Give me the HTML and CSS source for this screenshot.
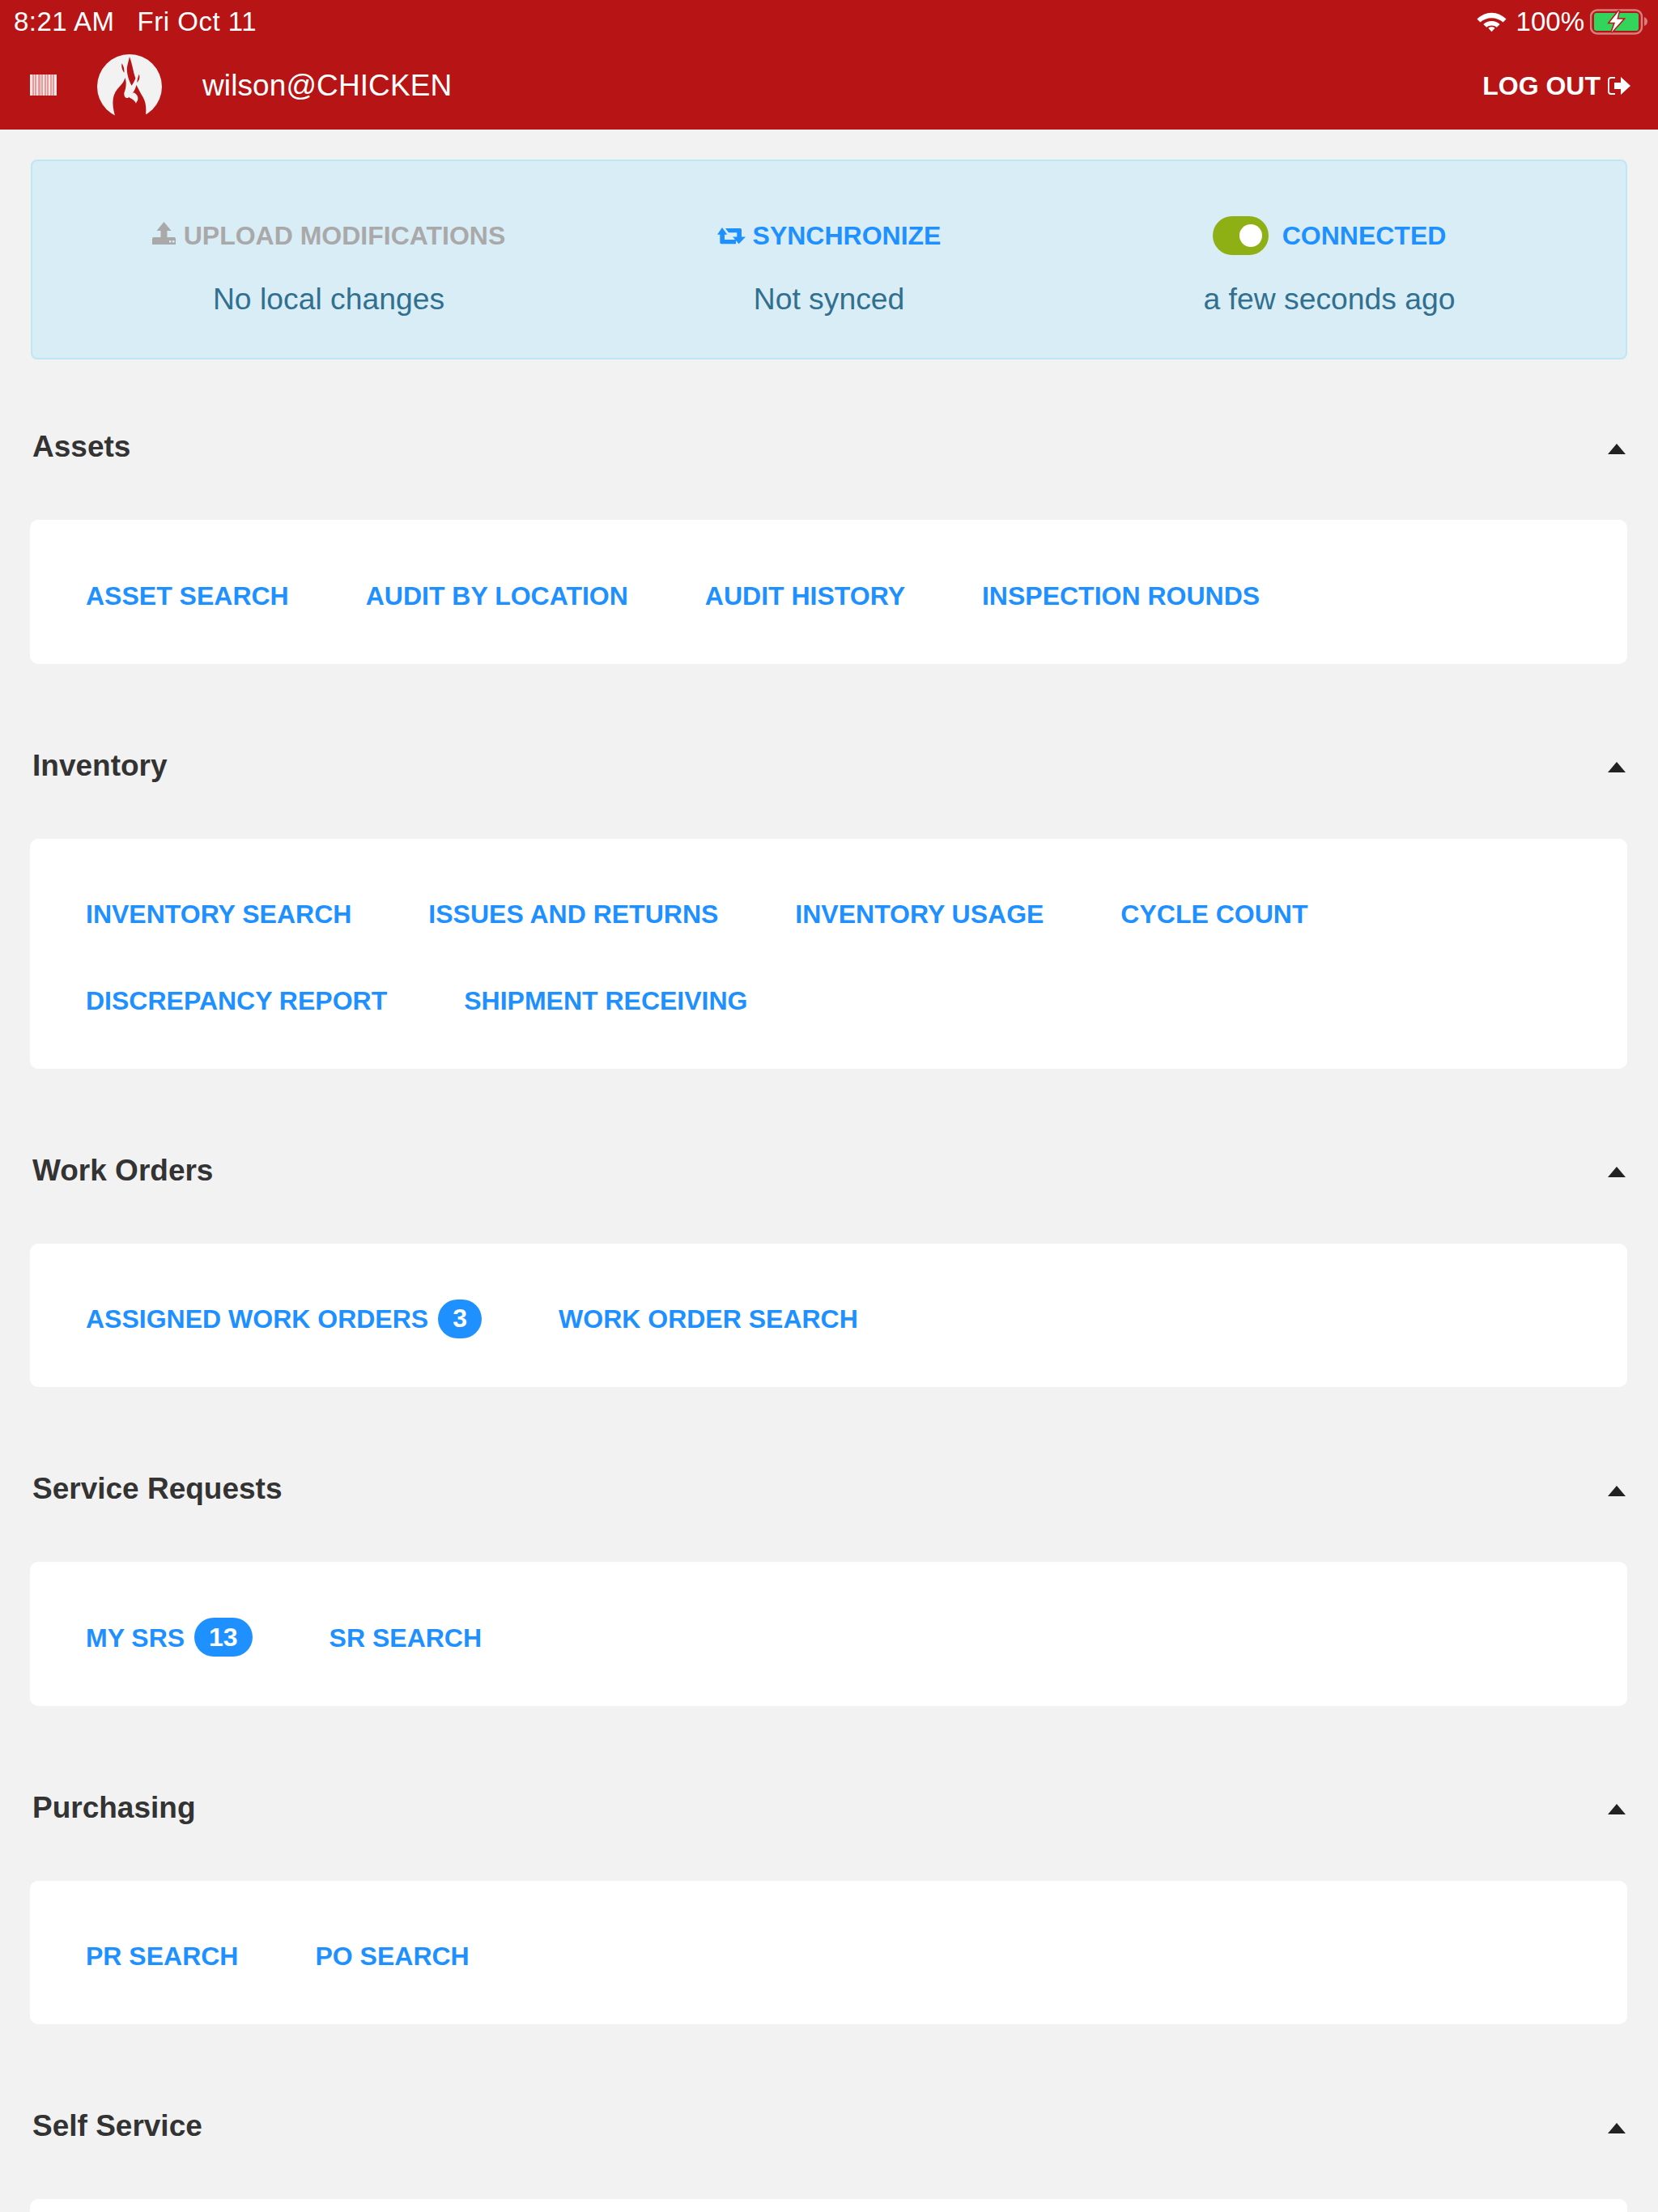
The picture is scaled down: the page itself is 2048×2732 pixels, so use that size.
FILE: index.html
```html
<!DOCTYPE html>
<html lang="en">
<head>
<meta charset="utf-8">
<title>Home</title>
<link rel="stylesheet" href="styles.css">
</head>
<body>
<header class="topbar">
  <div class="status">
    <div class="status-time"><span>8:21 AM</span><span>Fri Oct 11</span></div>
    <div class="status-right">
      <svg class="wifi" viewBox="0 4 38 24"><path d="M19 4C12 4 6 7 .5 12l4 4C8.500 12.500 13.500 10.500 19 10.500s10.500 2 14.500 5.500l4-4C32 7 26 4 19 4zM19 14.500c-4 0-7.500 1.400-10.500 4l4 4c2-1.700 4-2.500 6.500-2.500s4.500.8 6.500 2.500l4-4c-3-2.600-6.500-4-10.500-4zM19 22c-1.800 0-3 .5-4.200 1.500L19 28l4.200-4.500C22 22.500 20.800 22 19 22z" fill="#fff"/></svg>
      <span class="percent">100%</span>
      <svg class="battery" viewBox="0 0 72 32"><rect x="1" y="1.500" width="63" height="29" rx="8" fill="none" stroke="#fff" stroke-opacity=".45" stroke-width="2.500"/><path d="M67 10c2.500.8 4 3 4 5.500s-1.500 4.700-4 5.500z" fill="#fff" fill-opacity=".45"/><rect x="5" y="5" width="55" height="22" rx="3" fill="#32d45c"/><path class="bolt" d="M36 2 24.300 16.700H31L26.700 28.700 41 12.700H33.300z"/></svg>
    </div>
  </div>
  <nav class="navbar">
    <svg class="barcode" viewBox="0 0 33 26"><path d="M0 0h3v26H0zM5 0h1v26H5zM8 0h2v26H8zM13 0h1v26h-1zM16 0h2v26h-2zM20 0h1v26h-1zM23 0h2v26h-2zM27 0h1v26h-1zM30 0h3v26h-3z" fill="#f8e4e4"/><path d="M3 0h2v26H3zM6 0h2v26H6zM10 0h3v26h-3zM14 0h2v26h-2zM18 0h2v26h-2zM21 0h2v26h-2zM25 0h2v26h-2zM28 0h2v26h-2z" fill="#e89a9a"/></svg>
    <svg class="logo" viewBox="30 21 240 240">
      <circle cx="150" cy="141" r="120" fill="#f2f2f2"/>
      <path d="M100 262C85 215 82 178 105 150 118 135 130 125 133 108 141 125 136 150 130 165 129 182 141 190 153 176 165 163 172 150 175 135 184 150 190 165 200 180 213 203 213 230 208 262Z" fill="#b71515"/>
      <path d="M150 30C160 55 163 85 172 110 168 122 162 130 158 137 148 120 138 90 141 68 143 55 148 42 150 30Z" fill="#b71515"/>
      <path d="M122 55C128 65 132 78 130 90 124 82 118 66 122 55ZM185 95C190 105 186 118 178 126 178 115 182 105 185 95Z" fill="#b71515"/>
      <path d="M150 172C158 168 166 160 170 165 178 172 184 180 180 192 176 198 175 200 174 203 170 194 162 186 150 182Z" fill="#f2f2f2"/>
    </svg>
    <span class="user">wilson@CHICKEN</span>
    <a class="logout" href="#">LOG OUT
      <svg class="logout-icon" viewBox="0 0 28 22"><path d="M9 1H4a3 3 0 0 0-3 3v14a3 3 0 0 0 3 3h5" fill="none" stroke="#fff" stroke-width="1.800"/><path d="M8 7h8V0l12 11-12 11v-7H8z" fill="#fff"/></svg>
    </a>
  </nav>
</header>
<main class="content">
  <div class="alert">
    <div class="col">
      <div class="action muted">
        <svg class="icon-upload" viewBox="0 0 29 29"><path d="M14.500 0 23.500 11H18.500V19H27a2 2 0 0 1 2 2v7H0V21a2 2 0 0 1 2-2H10.500V11H5.500z" fill="#a9a9a9"/><path d="M21 23h2.500v2.500H21zM25 23h2.500v2.500H25z" fill="#d9edf7"/></svg>
        <span>UPLOAD MODIFICATIONS</span>
      </div>
      <div class="note">No local changes</div>
    </div>
    <div class="col">
      <div class="action">
        <svg class="icon-sync" viewBox="0 0 35 20" preserveAspectRatio="none"><path d="M6 0 12.300 8.300H9V14.300H23V19.300H5A1.700 1.700 0 0 1 3.300 17.600V8.300H0zM10 1H28.300A1.700 1.700 0 0 1 30 2.700V11H35L26.700 19.300 19 11H24.300V6H14z" fill="#1e90ff"/></svg>
        <span>SYNCHRONIZE</span>
      </div>
      <div class="note">Not synced</div>
    </div>
    <div class="col">
      <div class="action">
        <span class="toggle"><span class="knob"></span></span>
        <span>CONNECTED</span>
      </div>
      <div class="note">a few seconds ago</div>
    </div>
  </div>

  <section class="section">
    <div class="section-head"><h2>Assets</h2><span class="caret"></span></div>
    <div class="card">
      <a href="#">ASSET SEARCH</a>
      <a href="#">AUDIT BY LOCATION</a>
      <a href="#">AUDIT HISTORY</a>
      <a href="#">INSPECTION ROUNDS</a>
    </div>
  </section>

  <section class="section">
    <div class="section-head"><h2>Inventory</h2><span class="caret"></span></div>
    <div class="card">
      <a href="#">INVENTORY SEARCH</a>
      <a href="#">ISSUES AND RETURNS</a>
      <a href="#">INVENTORY USAGE</a>
      <a href="#">CYCLE COUNT</a>
      <a href="#">DISCREPANCY REPORT</a>
      <a href="#">SHIPMENT RECEIVING</a>
    </div>
  </section>

  <section class="section">
    <div class="section-head"><h2>Work Orders</h2><span class="caret"></span></div>
    <div class="card">
      <a href="#">ASSIGNED WORK ORDERS <span class="badge">3</span></a>
      <a href="#">WORK ORDER SEARCH</a>
    </div>
  </section>

  <section class="section">
    <div class="section-head"><h2>Service Requests</h2><span class="caret"></span></div>
    <div class="card">
      <a href="#">MY SRS <span class="badge">13</span></a>
      <a href="#">SR SEARCH</a>
    </div>
  </section>

  <section class="section">
    <div class="section-head"><h2>Purchasing</h2><span class="caret"></span></div>
    <div class="card">
      <a href="#">PR SEARCH</a>
      <a href="#">PO SEARCH</a>
    </div>
  </section>

  <section class="section">
    <div class="section-head"><h2>Self Service</h2><span class="caret"></span></div>
    <div class="card card-cut"></div>
  </section>
</main>
</body>
</html>
```
FILE: styles.css
```css
* { box-sizing: border-box; }
html, body { margin: 0; padding: 0; }
body {
  width: 2048px;
  height: 2732px;
  overflow: hidden;
  background: #f2f2f2;
  font-family: "Liberation Sans", Arial, sans-serif;
  color: #333;
}
a { text-decoration: none; }

.topbar { height: 160px; background: #b71515; color: #fff; overflow: hidden; }
.status {
  height: 52px;
  padding: 2px 12px 0 17px;
  display: flex;
  align-items: center;
  justify-content: space-between;
  font-size: 33px;
}
.status-time { display: flex; gap: 28px; letter-spacing: 0.5px; }
.status-right { display: flex; align-items: center; }
.wifi { width: 37px; height: 25px; }
.percent { margin-left: 12px; margin-right: 7px; }
.battery { width: 72px; height: 32px; }
.bolt {
  fill: #fff;
  stroke: #b71515;
  stroke-width: 3px;
  paint-order: stroke;
}

.navbar {
  height: 108px;
  padding: 0 34px 0 37px;
  display: flex;
  align-items: center;
}
.barcode { width: 33px; height: 26px; margin-top: -2px; }
.logo { width: 80px; height: 80px; margin-left: 50px; margin-top: 2px; }
.user { margin-left: 50px; font-size: 37px; letter-spacing: 0.1px; }
.logout {
  margin-left: auto;
  display: flex;
  align-items: center;
  gap: 9px;
  color: #fff;
  font-size: 32px;
  font-weight: 700;
}
.logout-icon { width: 28px; height: 22px; }

.content { padding: 37px 38px 0 37px; }

.alert {
  height: 247px;
  margin-left: 1px;
  padding: 0 57px;
  display: grid;
  grid-template-columns: repeat(3, 1fr);
  align-content: start;
  background: #d9edf7;
  border: 2px solid #bce8f1;
  border-radius: 8px;
  color: #31708f;
}
.col { padding-top: 68px; text-align: center; }
.action {
  height: 48px;
  display: flex;
  align-items: center;
  justify-content: center;
  gap: 9px;
  color: #1e90ff;
  font-size: 32px;
  font-weight: 700;
}
.muted { color: #a9a9a9; gap: 10px; }
.note { margin-top: 30px; font-size: 37.300px; line-height: 48px; }
.icon-upload { width: 29px; height: 29px; margin-top: -6px; }
.icon-sync { width: 35px; height: 21px; }
.toggle {
  width: 69px;
  height: 48px;
  padding-right: 8px;
  display: flex;
  align-items: center;
  justify-content: flex-end;
  background: #8fb015;
  border-radius: 24px;
  margin-right: 8px;
}
.knob { width: 28px; height: 28px; background: #fff; border-radius: 50%; }

.section { margin-top: 34px; }
.alert + .section { margin-top: 16px; }
.section-head {
  height: 182px;
  padding: 2px 2px 0 3px;
  display: flex;
  align-items: center;
  justify-content: space-between;
}
h2 { margin: 0; font-size: 37px; font-weight: 700; color: #333; }
.caret {
  width: 0;
  height: 0;
  margin-top: 4px;
  border-left: 11px solid transparent;
  border-right: 11px solid transparent;
  border-bottom: 13px solid #222;
}
.card {
  min-height: 177px;
  padding: 41px 69px 30px;
  display: flex;
  flex-wrap: wrap;
  column-gap: 95px;
  background: #fff;
  border-radius: 10px;
}
.card-cut { min-height: 0; height: 16px; padding: 0; border-radius: 10px 10px 0 0; }
.card a {
  height: 106.500px;
  display: flex;
  align-items: center;
  color: #1e90ff;
  font-size: 32px;
  font-weight: 700;
  white-space: pre;
}
.badge {
  min-width: 54px;
  height: 48px;
  padding: 0 18px;
  margin-left: 3px;
  margin-top: -2px;
  display: inline-flex;
  align-items: center;
  justify-content: center;
  background: #1e90ff;
  border-radius: 24px;
  color: #fff;
  font-size: 32px;
}
```
